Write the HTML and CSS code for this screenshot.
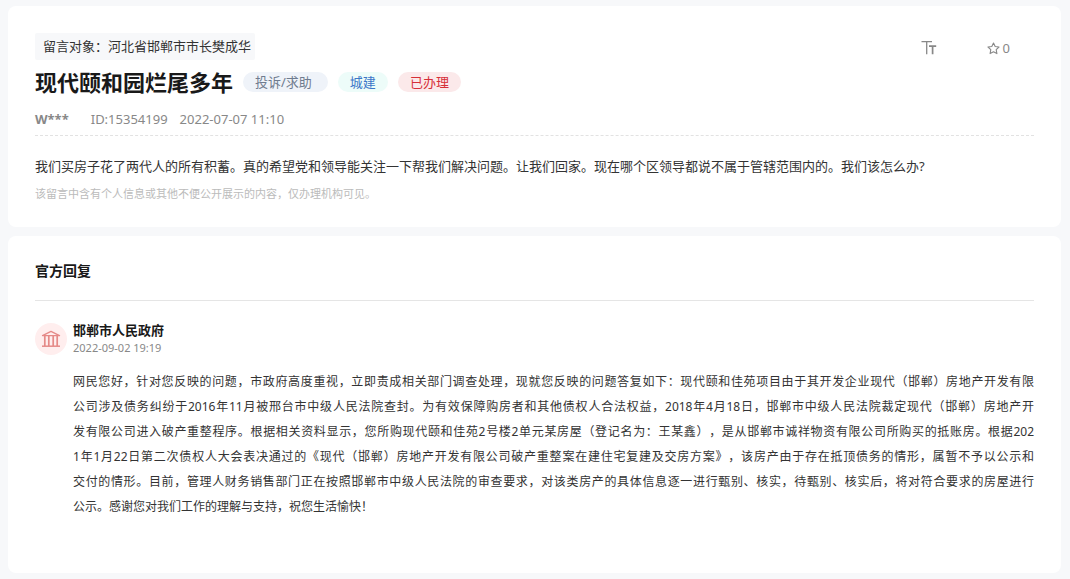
FILE: index.html
```html
<!DOCTYPE html>
<html lang="zh-CN">
<head>
  <meta charset="UTF-8" />
  <title>现代颐和园烂尾多年</title>
  <meta name="viewport" content="width=device-width, initial-scale=1" />
  <link rel="stylesheet" href="styles.css">
</head>
<body>

  <!-- 留言 -->
  <main class="card message">
    <div class="message-top">
      <div class="target">留言对象：河北省邯郸市市长樊成华</div>
      <div class="tools">
        <button type="button" class="tool" aria-label="字号">
          <svg width="16" height="16" viewBox="0 0 16 16" fill="none" stroke="currentColor">
            <path d="M0.5 1.6H11M5.7 1.6V14.2" stroke-width="1.3" />
            <path d="M8 6.2H15.2M11.6 6.2V14.2" stroke-width="1.7" />
          </svg>
        </button>
        <button type="button" class="tool">
          <svg width="13" height="13" viewBox="0 0 13 13" fill="none" stroke="currentColor" stroke-width="1.1" stroke-linejoin="round">
            <path d="M6.5 1L8.2 4.5L12 5L9.2 7.7L9.9 11.6L6.5 9.8L3.1 11.6L3.8 7.7L1 5L4.8 4.5Z" />
          </svg>
          <span>0</span>
        </button>
      </div>
    </div>

    <div class="title-row">
      <h1>现代颐和园烂尾多年</h1>
      <span class="tag tag-type">投诉/求助</span>
      <span class="tag tag-field">城建</span>
      <span class="tag tag-state">已办理</span>
    </div>

    <div class="meta">
      <b>W***</b>
      <span>ID:15354199</span>
      <span>2022-07-07 11:10</span>
    </div>

    <p class="content">我们买房子花了两代人的所有积蓄。真的希望党和领导能关注一下帮我们解决问题。让我们回家。现在哪个区领导都说不属于管辖范围内的。我们该怎么办?</p>
    <p class="notice">该留言中含有个人信息或其他不便公开展示的内容，仅办理机构可见。</p>
  </main>

  <!-- 官方回复 -->
  <section class="card reply">
    <h2>官方回复</h2>
    <div class="reply-item">
      <div class="avatar">
        <svg width="20" height="18" viewBox="0 0 20 18" fill="none" stroke="currentColor" stroke-linejoin="round">
          <path d="M1.5 5.6L10 1.4L18.5 5.6Z" stroke-width="1.3" />
          <path d="M3.8 6V16M7.8 6V16M12.2 6V16M16.2 6V16" stroke-width="1.7" />
          <path d="M1 16.2H19" stroke-width="1.5" />
        </svg>
      </div>
      <div class="reply-main">
        <h3>邯郸市人民政府</h3>
        <time datetime="2022-09-02T19:19">2022-09-02 19:19</time>
        <p class="reply-text">网民您好，针对您反映的问题，市政府高度重视，立即责成相关部门调查处理，现就您反映的问题答复如下：现代颐和佳苑项目由于其开发企业现代（邯郸）房地产开发有限<br>公司涉及债务纠纷于2016年11月被邢台市中级人民法院查封。为有效保障购房者和其他债权人合法权益，2018年4月18日，邯郸市中级人民法院裁定现代（邯郸）房地产开<br>发有限公司进入破产重整程序。根据相关资料显示，您所购现代颐和佳苑2号楼2单元某房屋（登记名为：王某鑫），是从邯郸市诚祥物资有限公司所购买的抵账房。根据202<br>1年1月22日第二次债权人大会表决通过的《现代（邯郸）房地产开发有限公司破产重整案在建住宅复建及交房方案》，该房产由于存在抵顶债务的情形，属暂不予以公示和<br>交付的情形。目前，管理人财务销售部门正在按照邯郸市中级人民法院的审查要求，对该类房产的具体信息逐一进行甄别、核实，待甄别、核实后，将对符合要求的房屋进行</p>
        <p class="reply-end">公示。感谢您对我们工作的理解与支持，祝您生活愉快！</p>
      </div>
    </div>
  </section>

</body>
</html>
```
FILE: styles.css
```css
body {
  margin: 0;
  padding: 6px 9px 6px 8px;
  background: #f7f8fa;
  color: #333;
  font-family: "Noto Sans", "Noto Sans CJK SC", sans-serif;
  font-size: 13px;
  text-spacing-trim: space-all;
}

h1, h2, h3, p {
  margin: 0;
}

.card {
  background: #fff;
  border-radius: 8px;
}

.message {
  padding: 27px 27px 23px;
}

.message-top {
  display: flex;
  justify-content: space-between;
  align-items: flex-end;
}

.target {
  padding: 0 4px 0 8px;
  line-height: 27px;
  background: #f7f8fa;
  border-radius: 2px;
}

.tools {
  display: flex;
  gap: 50px;
  padding-right: 24px;
}

.tool {
  display: flex;
  align-items: center;
  gap: 3px;
  height: 24px;
  padding: 0;
  border: none;
  background: none;
  color: #888;
  font-family: inherit;
  font-size: 13px;
  cursor: pointer;
}

.title-row {
  display: flex;
  align-items: center;
  gap: 10px;
  min-height: 44px;
}

.title-row h1 {
  font-size: 22px;
  line-height: 32px;
  color: #191919;
}

.tag {
  padding: 0 12px;
  line-height: 20px;
  border-radius: 10px;
}

.tag-type {
  padding-right: 16px;
  background: #eff3f9;
  color: #6f7c8f;
}

.tag-field {
  background: #edfcf9;
  color: #3c78c8;
}

.tag-state {
  background: #fbe9ea;
  color: #d62f38;
}

.meta {
  display: flex;
  gap: 12px;
  line-height: 31px;
  border-bottom: 1px dashed #e2e2e2;
  color: #888;
}

.meta b {
  margin-right: 10px;
}

.content {
  padding-top: 18px;
  line-height: 25px;
}

.notice {
  margin-top: 5px;
  font-size: 11px;
  line-height: 20px;
  color: #bbb;
}

.reply {
  margin-top: 9px;
  padding: 20px 27px 54px;
}

.reply h2 {
  padding-bottom: 14px;
  border-bottom: 1px solid #e5e5e5;
  font-size: 14px;
  line-height: 30px;
  color: #191919;
}

.reply-item {
  display: flex;
  gap: 6px;
  margin-top: 19px;
}

.avatar {
  display: flex;
  flex: none;
  align-items: center;
  justify-content: center;
  width: 32px;
  height: 32px;
  margin-top: 3px;
  border-radius: 50%;
  background: #ffeeee;
  color: #e58a88;
}

.reply-main {
  flex: 1;
}

.reply-main h3 {
  font-size: 13px;
  line-height: 20px;
  color: #191919;
}

.reply-main time {
  display: block;
  font-size: 11px;
  line-height: 16px;
  color: #888;
}

.reply-text,
.reply-end {
  font-size: 12px;
  line-height: 25px;
}

.reply-text {
  margin-top: 13px;
  text-align: justify;
  text-align-last: justify;
}
```
